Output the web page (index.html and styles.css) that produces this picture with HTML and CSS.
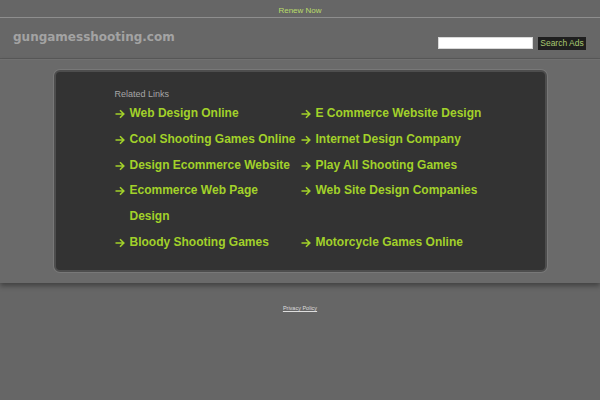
FILE: index.html
```html
<!DOCTYPE html>
<html>
<head>
<meta charset="utf-8">
<link rel="stylesheet" href="styles.css">
</head>
<body>
<div class="topbar"><a href="#" class="renew">Renew Now</a></div>
<div class="header">
  <div class="domain">gungamesshooting.com</div>
  <form class="search">
    <input type="text" class="search-input">
    <button type="button" class="search-btn">Search Ads</button>
  </form>
</div>
<div class="main">
  <div class="card">
    <div class="related">Related Links</div>
    <div class="links">
      <a href="#" class="item"><svg class="arrow" viewBox="0 0 10 10"><path d="M0.5 5H8.8M5 1.2L8.8 5L5 8.8"/></svg><span class="txt">Web Design Online</span></a>
      <a href="#" class="item"><svg class="arrow" viewBox="0 0 10 10"><path d="M0.5 5H8.8M5 1.2L8.8 5L5 8.8"/></svg><span class="txt">E Commerce Website Design</span></a>
      <a href="#" class="item"><svg class="arrow" viewBox="0 0 10 10"><path d="M0.5 5H8.8M5 1.2L8.8 5L5 8.8"/></svg><span class="txt">Cool Shooting Games Online</span></a>
      <a href="#" class="item"><svg class="arrow" viewBox="0 0 10 10"><path d="M0.5 5H8.8M5 1.2L8.8 5L5 8.8"/></svg><span class="txt">Internet Design Company</span></a>
      <a href="#" class="item"><svg class="arrow" viewBox="0 0 10 10"><path d="M0.5 5H8.8M5 1.2L8.8 5L5 8.8"/></svg><span class="txt">Design Ecommerce Website</span></a>
      <a href="#" class="item"><svg class="arrow" viewBox="0 0 10 10"><path d="M0.5 5H8.8M5 1.2L8.8 5L5 8.8"/></svg><span class="txt">Play All Shooting Games</span></a>
      <a href="#" class="item"><svg class="arrow" viewBox="0 0 10 10"><path d="M0.5 5H8.8M5 1.2L8.8 5L5 8.8"/></svg><span class="txt">Ecommerce Web Page Design</span></a>
      <a href="#" class="item"><svg class="arrow" viewBox="0 0 10 10"><path d="M0.5 5H8.8M5 1.2L8.8 5L5 8.8"/></svg><span class="txt">Web Site Design Companies</span></a>
      <a href="#" class="item"><svg class="arrow" viewBox="0 0 10 10"><path d="M0.5 5H8.8M5 1.2L8.8 5L5 8.8"/></svg><span class="txt">Bloody Shooting Games</span></a>
      <a href="#" class="item"><svg class="arrow" viewBox="0 0 10 10"><path d="M0.5 5H8.8M5 1.2L8.8 5L5 8.8"/></svg><span class="txt">Motorcycle Games Online</span></a>
    </div>
  </div>
</div>
<div class="footer"><a href="#" class="privacy">Privacy Policy</a></div>
</body>
</html>
```

FILE: styles.css
```css
html, body {
  margin: 0;
  padding: 0;
  background: #666666;
  font-family: "Liberation Sans", Arial, sans-serif;
}
a { text-decoration: none; }

.topbar {
  height: 17px;
  line-height: 15px;
  text-align: center;
  border-bottom: 1px solid #8e8e8e;
  background: #666666;
}
.renew {
  font-size: 8px;
  color: #b9dc6a;
}

.header {
  height: 40px;
  display: flex;
  justify-content: space-between;
  align-items: flex-start;
  padding: 0 14px 0 13px;
  border-bottom: 1px solid #595959;
  background: #676767;
}
.domain {
  font-family: "DejaVu Sans", Verdana, sans-serif;
  font-weight: bold;
  font-size: 12px;
  color: #a3a3a3;
  margin-top: 12px;
}
.search {
  display: flex;
  align-items: flex-start;
  gap: 5px;
  margin: 19px 0 0 0;
}
.search-input {
  width: 95px;
  height: 12px;
  box-sizing: border-box;
  border: 1px solid #d8d8d8;
  background: #ffffff;
  padding: 0;
  margin: 0;
}
.search-btn {
  height: 13px;
  width: 48px;
  box-sizing: border-box;
  padding: 0;
  margin: 0;
  border: none;
  background: #1f1f1f;
  color: #a8c870;
  font-family: "Liberation Sans", Arial, sans-serif;
  font-size: 8.5px;
  line-height: 13px;
}

.main {
  background: #6a6a6a;
  padding: 10px 0 11px;
  box-shadow: 0 3px 5px rgba(0,0,0,0.35);
  border-top: 1px solid #707070;
}
.card {
  width: 493px;
  margin: 0 auto;
  box-sizing: border-box;
  background: #333333;
  border: 2px solid #4d4d4d;
  border-radius: 6px;
  box-shadow: 0 0 0 1px #787878;
  padding: 16px 0 14px 59px;
}
.related {
  font-size: 9px;
  line-height: 12px;
  color: #a6a6a6;
  margin-bottom: 1px;
}
.links {
  display: grid;
  grid-template-columns: 186px 186px;
}
.item {
  display: flex;
  align-items: flex-start;
  color: #a2d12a;
  font-weight: bold;
  font-size: 12px;
  line-height: 25.8px;
}
.arrow {
  width: 10px;
  height: 10px;
  margin: 8px 5px 0 0;
  flex: none;
  fill: none;
  stroke: #a2d12a;
  stroke-width: 1.6;
}
.txt {
  width: 170px;
}

.footer {
  text-align: center;
  padding-top: 13px;
}
.privacy {
  font-size: 5.5px;
  color: #dddddd;
  text-decoration: underline;
}
```
